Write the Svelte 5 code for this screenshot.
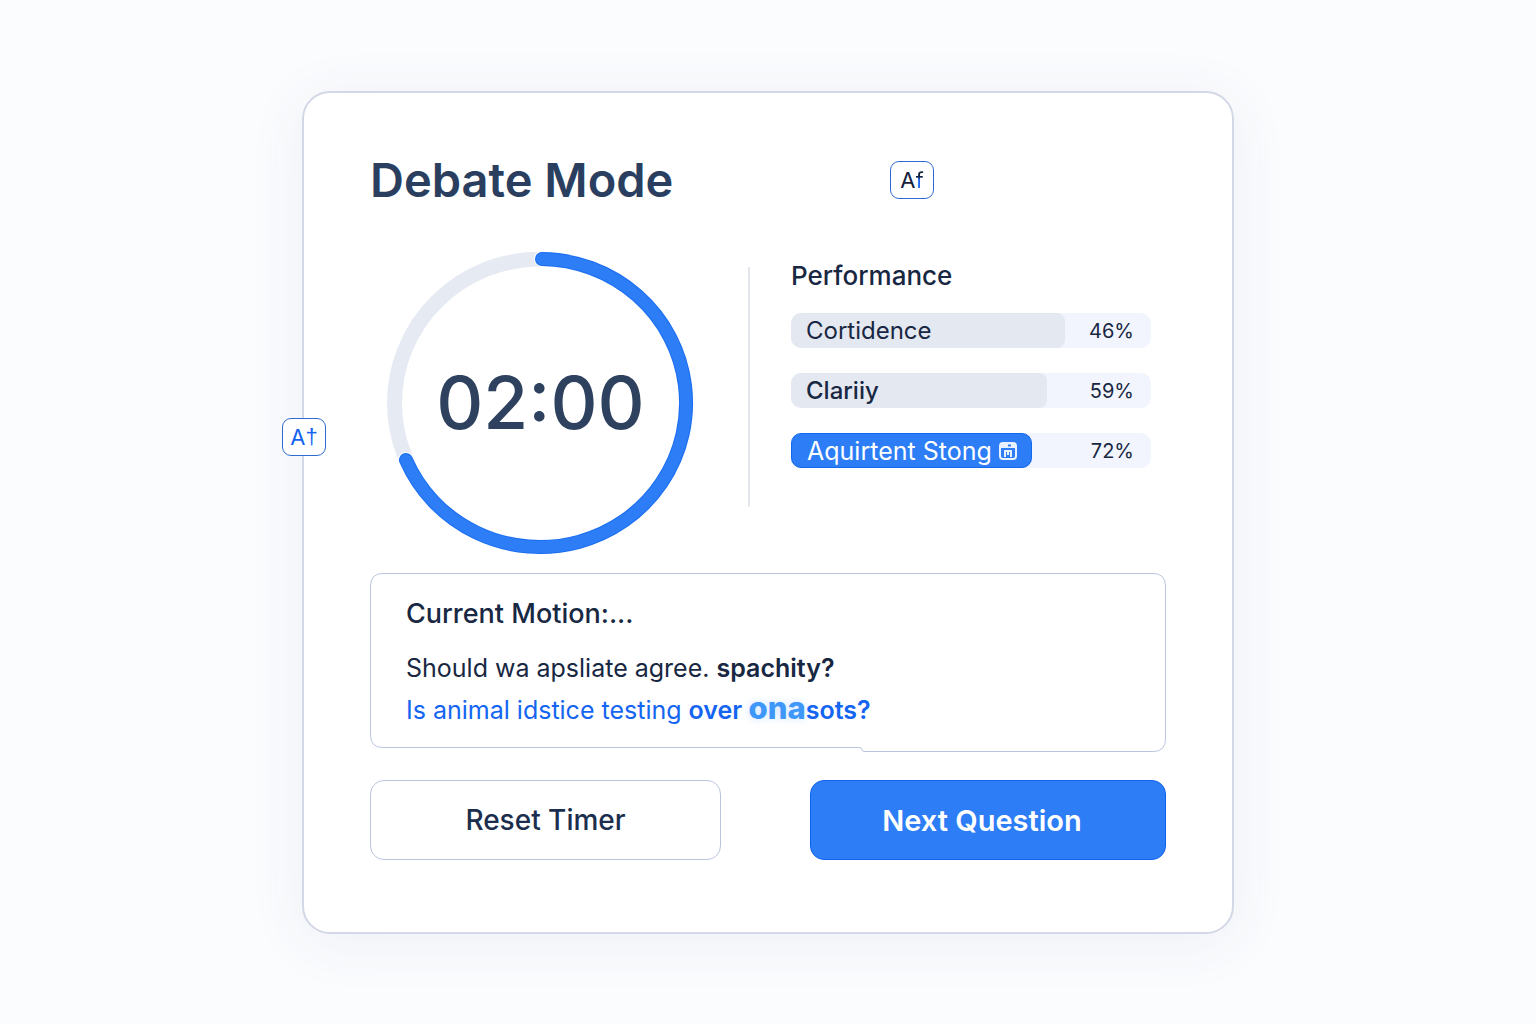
<script>
    // Rows in the performance panel, fill is the width of the bar in percent
    const metrics = [
        { label: "Cortidence", value: 46, fill: 76, style: "regular" },
        { label: "Clariiy", value: 59, fill: 71, style: "medium" },
        { label: "Aquirtent Stong", value: 72, fill: 67, style: "active" }
    ];

    const startSeconds = 120;
    let seconds = $state(startSeconds);
    let question = $state(1);

    let clock = $derived(
        String(Math.floor(seconds / 60)).padStart(2, "0") + ":" + String(seconds % 60).padStart(2, "0")
    );

    function resetTimer() {
        seconds = startSeconds;
    }

    function nextQuestion() {
        question += 1;
        resetTimer();
    }

    const arc = "M155 7 A146 144 0 1 1 19 208";
</script>

<main class="page">
    <section class="card">
        <button class="badge side" type="button">A<span class="mark dagger">†</span></button>

        <header class="head">
            <h1>Debate Mode</h1>
            <button class="badge" type="button">A<span class="mark">f</span></button>
        </header>

        <div class="overview">
            <div class="timer">
                <svg viewBox="0 0 307 302" aria-hidden="true">
                    <ellipse cx="153.5" cy="151" rx="146" ry="144" class="ring" />
                    <path d={arc} class="halo" />
                    <path d={arc} class="edge" />
                    <path d={arc} class="progress" />
                </svg>
                <span class="clock" role="timer">{clock}</span>
            </div>

            <div class="divider"></div>

            <div class="performance">
                <h2>Performance</h2>
                <ul>
                    {#each metrics as { label, value, fill, style }}
                        <li class={style}>
                            <div class="fill" style="width:{fill}%">
                                <span>{label}</span>
                                {#if style === "active"}
                                    <svg class="icon" viewBox="0 0 18 18" aria-hidden="true">
                                        <rect x="1" y="1" width="16" height="16" rx="3" />
                                        <path d="M1 6V4a3 3 0 0 1 3-3h10a3 3 0 0 1 3 3v2z" class="top" />
                                        <path d="M9 3.5h3" class="slot" />
                                        <path d="M5 9h8M6 9v6M9 9v4M12 9v6" />
                                    </svg>
                                {/if}
                            </div>
                            <span class="value">{value}%</span>
                        </li>
                    {/each}
                </ul>
            </div>
        </div>

        <article class="motion">
            <!-- Outline with the small step in the bottom edge -->
            <svg class="outline" viewBox="0 0 796 179" preserveAspectRatio="none" aria-hidden="true">
                <path d="M13 .5H783Q795.5 .5 795.5 13V166Q795.5 178.5 783 178.5H494Q492 178.5 492 176.5Q491.5 174.5 489 174.5H13Q.5 174.5 .5 162V13Q.5 .5 13 .5Z" />
            </svg>
            <h2>Current Motion:...</h2>
            <p>Should wa apsliate agree. <strong>spachity?</strong></p>
            <p>
                <a href="#question-{question}">Is animal idstice testing <strong>over <span class="glow">ona</span>sots?</strong></a>
            </p>
        </article>

        <div class="actions">
            <button class="reset" type="button" onclick={resetTimer}>Reset Timer</button>
            <button class="next" type="button" onclick={nextQuestion}>Next Question</button>
        </div>
    </section>
</main>

<style>
    :global(body) {
        margin: 0;
        background: #fbfcfe;
    }

    .page {
        box-sizing: border-box;
        min-height: 100vh;
        padding: 91px 24px 90px;
        font-family: Inter, "Liberation Sans", sans-serif;
        color: #182742;
    }

    .card {
        position: relative;
        box-sizing: border-box;
        max-width: 932px;
        margin: 0 auto;
        padding: 60px 66px 72px;
        background: #fff;
        border: 2px solid #d3d8e6;
        border-radius: 28px;
        box-shadow: 0 8px 60px rgba(50, 65, 120, 0.07);
    }

    button {
        font-family: inherit;
        cursor: pointer;
    }

    h1,
    h2,
    p,
    ul {
        margin: 0;
        padding: 0;
    }

    /* Header */
    .head {
        display: flex;
        align-items: center;
        justify-content: space-between;
        padding-right: 232px;
    }

    h1 {
        font-size: 47px;
        line-height: 54px;
        font-weight: 600;
        color: #2a3f60;
    }

    .badge {
        display: flex;
        align-items: center;
        justify-content: center;
        width: 44px;
        height: 38px;
        padding: 0;
        background: #fff;
        border: 1px solid #2f6bd0;
        border-radius: 9px;
        font-size: 22px;
        line-height: 24px;
        color: #14213d;
    }

    .mark {
        background: linear-gradient(#14213d 35%, #1f6bf5 50%);
        background-clip: text;
        color: transparent;
    }

    .dagger {
        background: none;
        font-family: "Liberation Sans", sans-serif;
        color: #1463f0;
    }

    .side {
        position: absolute;
        top: 325px;
        left: -22px;
        color: #1463f0;
    }

    /* Timer and performance */
    .overview {
        display: grid;
        grid-template-columns: 378px 2px 1fr;
        margin-top: 45px;
    }

    .timer {
        display: grid;
        align-items: center;
        justify-items: center;
        width: 307px;
        margin-left: 17px;
    }

    .timer > * {
        grid-area: 1 / 1;
    }

    .timer svg {
        display: block;
        width: 100%;
        fill: none;
        stroke-linecap: round;
    }

    .ring {
        stroke: #e6eaf3;
        stroke-width: 15;
    }

    .halo {
        stroke: #fff;
        stroke-width: 16;
    }

    .edge {
        stroke: #1a6df2;
        stroke-width: 14;
    }

    .progress {
        stroke: #2c7df6;
        stroke-width: 12;
    }

    .clock {
        font-size: 73px;
        line-height: 80px;
        font-weight: 500;
        color: #2e425f;
    }

    .divider {
        height: 240px;
        margin-top: 15px;
        background: #e1e5ee;
        border-radius: 1px;
    }

    .performance {
        padding: 8px 15px 0 41px;
    }

    h2 {
        font-size: 26px;
        line-height: 32px;
        font-weight: 500;
    }

    ul {
        display: grid;
        gap: 25px;
        margin-top: 21px;
        list-style: none;
    }

    li {
        display: flex;
        align-items: center;
        justify-content: space-between;
        height: 35px;
        background: #f2f5fd;
        border-radius: 10px;
    }

    .fill {
        display: flex;
        align-items: center;
        gap: 7px;
        box-sizing: border-box;
        height: 100%;
        padding-left: 15px;
        background: #e3e8f1;
        border-radius: 10px 8px 8px 10px;
        font-size: 24px;
        line-height: 32px;
        white-space: nowrap;
    }

    .medium .fill {
        font-weight: 500;
    }

    .active .fill {
        background: #2c7df6;
        border: 1px solid #1268ee;
        border-radius: 10px;
        font-size: 25px;
        color: #fff;
    }

    .value {
        padding-right: 17px;
        font-size: 20px;
        line-height: 24px;
    }

    .icon {
        flex: none;
        width: 18px;
        height: 18px;
        fill: none;
        stroke: #e9f1ff;
        stroke-width: 2;
    }

    .icon .top {
        fill: #e9f1ff;
        stroke: none;
    }

    .icon .slot {
        stroke: #2c7df6;
    }

    /* Motion box */
    .motion {
        position: relative;
        box-sizing: border-box;
        margin-top: 19px;
        padding: 25px 36px 21px;
    }

    .outline {
        position: absolute;
        inset: 0;
        width: 100%;
        height: 100%;
        fill: none;
        stroke: #b9c4dd;
        stroke-width: 1;
        pointer-events: none;
    }

    .motion h2 {
        font-size: 27px;
    }

    .motion p {
        font-size: 25px;
        line-height: 42px;
    }

    .motion h2 + p {
        margin-top: 17px;
    }

    strong {
        font-weight: 600;
    }

    .motion a {
        color: #1465f2;
        text-decoration: none;
    }

    .glow {
        font-size: 31px;
        line-height: 32px;
        font-weight: 800;
        color: #3f97fa;
        text-shadow: 0 0 10px #cfe3ff;
    }

    /* Buttons */
    .actions {
        display: grid;
        grid-template-columns: 351fr 356fr;
        gap: 89px;
        margin-top: 28px;
    }

    .actions button {
        height: 80px;
        padding: 0 16px;
        border-radius: 14px;
        font-size: 28px;
        line-height: 32px;
    }

    .reset {
        background: #fff;
        border: 1px solid #b9c4dd;
        font-weight: 500;
        color: #1c2e4e;
    }

    .actions .next {
        padding: 2px 28px 0 16px;
        background: #2c7df6;
        border: 1px solid #0f62ee;
        font-size: 29px;
        font-weight: 600;
        color: #fff;
    }
</style>
